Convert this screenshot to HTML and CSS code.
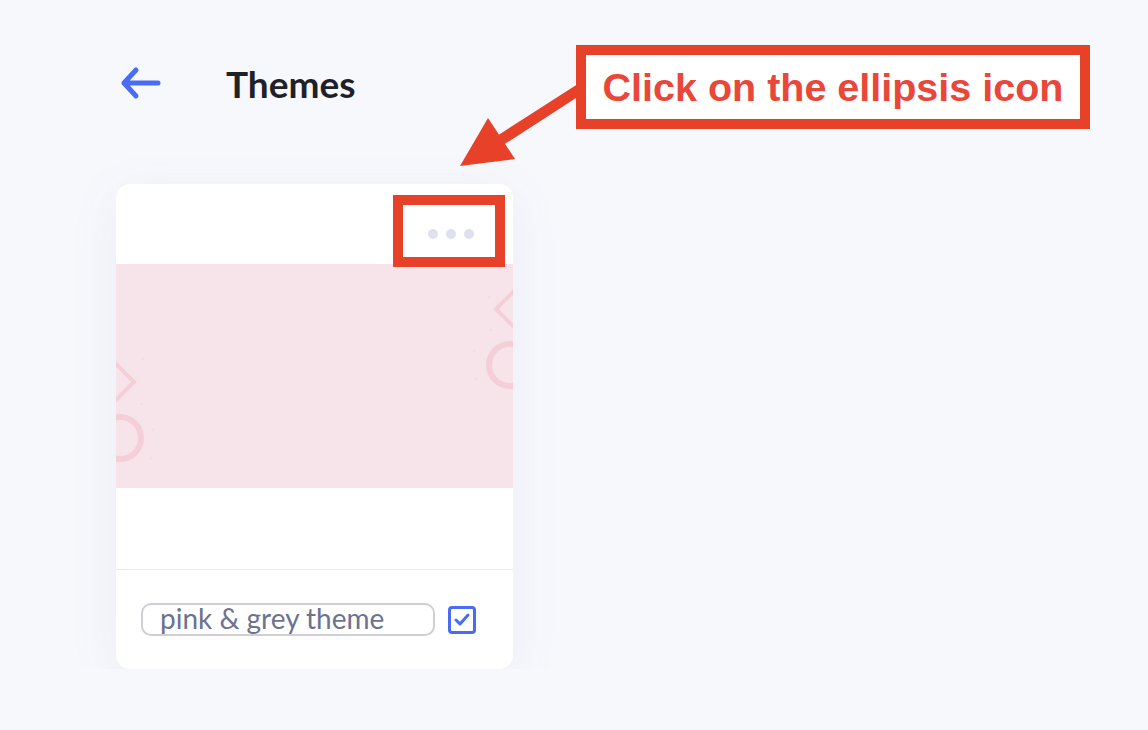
FILE: index.html
```html
<!DOCTYPE html>
<html lang="en">

<head>
    <meta charset="UTF-8">
    <meta name="viewport" content="width=device-width, initial-scale=1.0">
    <title>Themes</title>
    <link rel="stylesheet" href="styles.css">
</head>

<body>
    <div class="topbar">
        <a class="back-btn" href="#">
            <svg width="44" height="36" viewBox="0 0 44 36">
                <path d="M4 18 H38 M16 5 L4 18 L16 31" fill="none" stroke="#4a6cf4" stroke-width="5"
                    stroke-linecap="round" stroke-linejoin="round" />
            </svg>
        </a>
        <h1>Themes</h1>
    </div>

    <div class="card">
        <div class="card-head">
            <button class="more-btn">
                <span class="dot"></span>
                <span class="dot"></span>
                <span class="dot"></span>
            </button>
            <div class="highlight"></div>
        </div>
        <div class="card-preview">
            <svg class="pattern" width="397" height="224" viewBox="0 0 397 224">
                <g fill="none" stroke="#f5cfd7">
                    <path d="M0 100 L18 118 L0 136 L-18 118 Z" stroke-width="4" />
                    <circle cx="4" cy="174" r="21" stroke-width="6" />
                    <path d="M398 27 L380 45 L398 63 L416 45 Z" stroke-width="4" />
                    <circle cx="394" cy="101" r="21" stroke-width="6" />
                </g>
                <g fill="#f2dde3">
                    <circle cx="27" cy="95" r="1.5" />
                    <circle cx="26" cy="140" r="1.5" />
                    <circle cx="37" cy="166" r="1.5" />
                    <circle cx="35" cy="194" r="1.5" />
                    <circle cx="373" cy="33" r="1.5" />
                    <circle cx="375" cy="66" r="1.5" />
                    <circle cx="358" cy="87" r="1.5" />
                    <circle cx="360" cy="115" r="1.5" />
                </g>
            </svg>
        </div>
        <div class="card-body"></div>
        <div class="card-foot">
            <input class="theme-name" type="text" value="pink &amp; grey theme">
            <span class="check">
                <svg width="16" height="14" viewBox="0 0 16 14">
                    <path d="M2 7 L6 11 L14 2" fill="none" stroke="#4a6cf4" stroke-width="3"
                        stroke-linecap="round" stroke-linejoin="round" />
                </svg>
            </span>
        </div>
    </div>

    <!-- annotation -->
    <svg class="callout-arrow" width="140" height="100" viewBox="450 75 140 100">
        <path d="M580 89 L493 145" stroke="#e8412a" stroke-width="11" />
        <polygon points="460,166 488,118 515,159" fill="#e8412a" />
    </svg>
    <div class="callout">Click on the ellipsis icon</div>
</body>

</html>
```

FILE: styles.css
```css
body {
    margin: 0;
    background-color: #f7f8fc;
    font-family: Lato, "Open Sans", sans-serif;
    color: #1f2128;
}

.topbar {
    display: flex;
    align-items: center;
    height: 50px;
    margin-top: 58px;
    padding-left: 120px;
}

.back-btn {
    display: flex;
    width: 44px;
    height: 36px;
}

.topbar h1 {
    margin: 0 0 0 62px;
    font-size: 37px;
    font-weight: 700;
    color: #1f2128;
}

.card {
    width: 397px;
    margin: 76px 0 0 116px;
    background-color: #fff;
    border-radius: 14px;
    box-shadow: 0 10px 50px rgba(110, 120, 170, 0.08);
    overflow: hidden;
}

.card-head {
    position: relative;
    height: 80px;
    display: flex;
    justify-content: flex-end;
    align-items: flex-end;
    padding: 0 39px 25px 0;
    box-sizing: border-box;
}

.more-btn {
    display: flex;
    gap: 8px;
    padding: 0;
    border: none;
    background: none;
    cursor: pointer;
}

.dot {
    width: 10px;
    height: 10px;
    border-radius: 50%;
    background-color: #dde1ef;
}

.highlight {
    position: absolute;
    left: 277px;
    top: 11px;
    width: 92px;
    height: 52px;
    border: 10px solid #e8412a;
    z-index: 2;
}

.card-preview {
    position: relative;
    height: 224px;
    background-color: #f6e4ea;
    overflow: hidden;
}

.pattern {
    display: block;
}

.card-body {
    height: 81px;
    border-bottom: 1px solid #ececf0;
}

.card-foot {
    display: flex;
    align-items: center;
    gap: 13px;
    height: 99px;
    padding-left: 25px;
}

.theme-name {
    width: 294px;
    height: 33px;
    box-sizing: border-box;
    padding: 0 0 3px 17px;
    border: 2px solid #cfcfd4;
    border-radius: 10px;
    font-family: Lato, "Open Sans", sans-serif;
    font-size: 28px;
    color: #6b7390;
    outline: none;
}

.check {
    display: flex;
    align-items: center;
    justify-content: center;
    width: 28px;
    height: 28px;
    box-sizing: border-box;
    border: 3px solid #4a6cf4;
    border-radius: 4px;
}

.callout-arrow {
    position: absolute;
    left: 450px;
    top: 75px;
}

.callout {
    position: absolute;
    left: 576px;
    top: 45px;
    width: 494px;
    height: 64px;
    border: 10px solid #e8412a;
    background-color: #fff;
    display: flex;
    align-items: center;
    justify-content: center;
    font-family: "Liberation Sans", Arial, sans-serif;
    font-weight: 700;
    font-size: 39.5px;
    color: #e8473a;
}
```
